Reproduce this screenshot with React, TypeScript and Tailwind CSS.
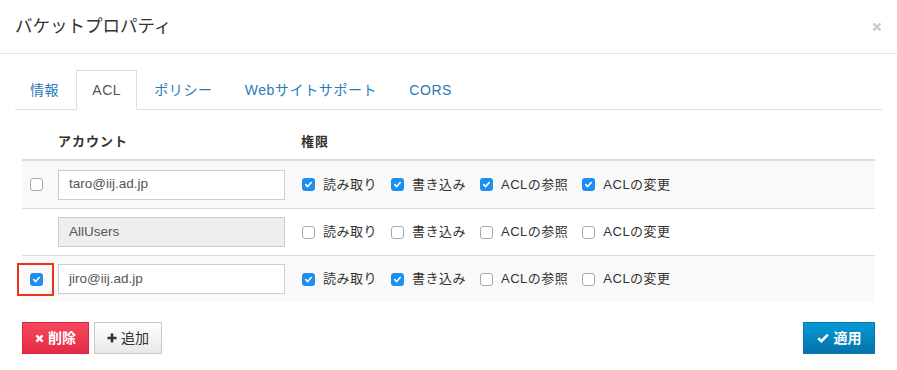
import React from "react";

type Perm = { label: string; checked: boolean };

type AclRow = {
  account: string;
  disabled?: boolean;
  selected: boolean;
  highlight?: boolean;
  perms: boolean[];
};

const permLabels = ["読み取り", "書き込み", "ACLの参照", "ACLの変更"];

const rows: AclRow[] = [
  { account: "taro@iij.ad.jp", selected: false, perms: [true, true, true, true] },
  { account: "AllUsers", disabled: true, selected: false, perms: [false, false, false, false] },
  { account: "jiro@iij.ad.jp", selected: true, highlight: true, perms: [true, true, false, false] },
];

const tabs = ["情報", "ACL", "ポリシー", "Webサイトサポート", "CORS"];

const Box: React.FC<{ checked: boolean }> = ({ checked }) =>
  checked ? (
    <span className="flex h-[13px] w-[13px] items-center justify-center rounded-[3px] bg-[#1f8ef1]">
      <svg width="9" height="9" viewBox="0 0 10 10">
        <path d="M2 5.2 L4.1 7.3 L8 2.8" fill="none" stroke="#fff" strokeWidth="1.8" strokeLinecap="round" strokeLinejoin="round" />
      </svg>
    </span>
  ) : (
    <span className="block h-[13px] w-[13px] rounded-[3px] border border-[#a9a9a9] bg-white" />
  );

const PermItem: React.FC<Perm> = ({ label, checked }) => (
  <div className="flex items-center gap-[8px] mr-[14px]">
    <Box checked={checked} />
    <span className="text-[13px] text-[#333] tracking-[0.5px]">{label}</span>
  </div>
);

export default function App() {
  return (
    <div
      className="w-[897px] h-[370px] bg-white text-[#333]"
      style={{ fontFamily: '"Liberation Sans", "Noto Sans CJK JP", sans-serif' }}
    >
      {/* header */}
      <div className="flex h-[54px] items-center justify-between border-b border-[#e5e5e5] pl-[15px] pr-[15px]">
        <div className="text-[17.5px] text-[#333]">バケットプロパティ</div>
        <svg width="10" height="10" viewBox="0 0 10 10">
          <path d="M1.5 1.5 L8.5 8.5 M8.5 1.5 L1.5 8.5" stroke="#c8c8c8" strokeWidth="2.4" />
        </svg>
      </div>

      {/* body */}
      <div className="px-[15px] pt-[16px]">
        <div className="flex h-[40px] border-b border-[#ddd]">
          {tabs.map((t, i) =>
            i === 1 ? (
              <div
                key={t}
                className="mr-[2px] -mb-px flex items-center border border-[#ddd] border-b-white bg-white px-[15px] pt-[1px] text-[14px] tracking-[0.6px] text-[#555]"
              >
                {t}
              </div>
            ) : (
              <div key={t} className="mr-[2px] flex items-center px-[15px] pt-[1px] text-[14px] tracking-[0.6px] text-[#2a7ab8]">
                {t}
              </div>
            )
          )}
        </div>

        <div className="px-[7px] pt-[15px]">
          {/* table head */}
          <div className="flex h-[36px] items-center border-b-2 border-[#ddd] text-[13px] font-bold">
            <div className="w-[28px]" />
            <div className="w-[243px] pl-[8px] tracking-[1px]">アカウント</div>
            <div className="pl-[8px] tracking-[1px]">権限</div>
          </div>

          {rows.map((r, idx) => (
            <div
              key={r.account}
              className={`flex h-[47px] items-center ${idx > 0 ? "border-t border-[#ddd]" : ""} ${
                idx % 2 === 0 ? "bg-[#f9f9f9]" : "bg-white"
              }`}
            >
              <div className="relative flex w-[28px] justify-center pl-[1px]">
                {!r.disabled && <Box checked={r.selected} />}
                {r.highlight && (
                  <div className="absolute left-[-5px] top-[-10px] h-[33px] w-[37px] border-2 border-[#f0301c]" />
                )}
              </div>
              <div className="w-[243px] px-[8px]">
                <div
                  className={`flex h-[30px] items-center border border-[#ccc] px-[10px] text-[13.5px] text-[#555] ${
                    r.disabled ? "bg-[#eeeeee]" : "bg-white"
                  }`}
                >
                  {r.account}
                </div>
              </div>
              <div className="flex items-center pl-[9px]">
                {permLabels.map((l, i) => (
                  <PermItem key={l} label={l} checked={r.perms[i]} />
                ))}
              </div>
            </div>
          ))}

          {/* buttons */}
          <div className="mt-[20px] flex items-center justify-between">
            <div className="flex gap-[5px]">
              <button className="flex h-[32px] w-[67px] items-center justify-center gap-[4px] border border-[#e0213e] bg-gradient-to-b from-[#f6485f] to-[#e42a44] text-[14px] font-bold text-white">
                <svg width="9" height="9" viewBox="0 0 10 10">
                  <path d="M1.5 1.5 L8.5 8.5 M8.5 1.5 L1.5 8.5" stroke="#fff" strokeWidth="2.6" />
                </svg>
                削除
              </button>
              <button className="flex h-[32px] w-[68px] items-center justify-center gap-[4px] border border-[#c8c8c8] bg-gradient-to-b from-white to-[#e8e8e8] text-[14px] text-[#333]">
                <svg width="10" height="10" viewBox="0 0 10 10">
                  <path d="M5 0.5 V9.5 M0.5 5 H9.5" stroke="#333" strokeWidth="2.6" />
                </svg>
                追加
              </button>
            </div>
            <button className="flex h-[32px] w-[72px] items-center justify-center gap-[5px] border border-[#0a78ae] bg-gradient-to-b from-[#0599d6] to-[#0473ab] text-[14px] font-bold text-white">
              <svg width="12" height="10" viewBox="0 0 12 10">
                <path d="M1.2 5.2 L4.4 8.2 L10.8 1.6" fill="none" stroke="#fff" strokeWidth="2.6" />
              </svg>
              適用
            </button>
          </div>
        </div>
      </div>
    </div>
  );
}
